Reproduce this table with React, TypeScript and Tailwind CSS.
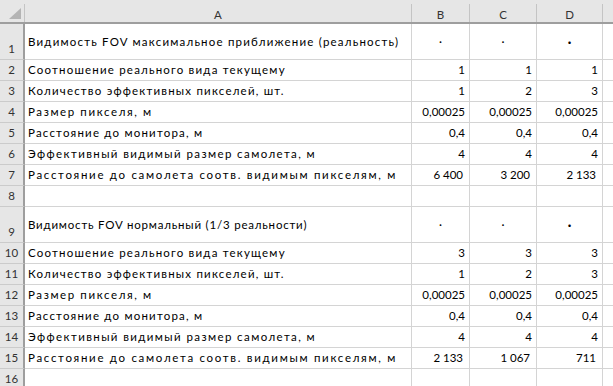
type Row = {
  n: number;
  a?: string;
  v?: [string, string, string];
  tall?: boolean;
  dots?: boolean;
  pad?: boolean;
  t?: string;
};

const rows: Row[] = [
  { n: 1, a: "Видимость FOV максимальное приближение (реальность)", tall: true, dots: true },
  { n: 2, a: "Соотношение реального вида текущему", v: ["1", "1", "1"] },
  { n: 3, a: "Количество эффективных пикселей, шт.", v: ["1", "2", "3"] },
  { n: 4, a: "Размер пикселя, м", v: ["0,00025", "0,00025", "0,00025"], t: "tracking-[1.6px]" },
  { n: 5, a: "Расстояние до монитора, м", v: ["0,4", "0,4", "0,4"] },
  { n: 6, a: "Эффективный видимый размер самолета, м", v: ["4", "4", "4"], t: "tracking-[1.4px]" },
  { n: 7, a: "Расстояние до самолета соотв. видимым пикселям, м", v: ["6 400", "3 200", "2 133"], pad: true, t: "tracking-[1.7px]" },
  { n: 8 },
  { n: 9, a: "Видимость FOV нормальный (1/3 реальности)", tall: true, dots: true, t: "tracking-[0.8px]" },
  { n: 10, a: "Соотношение реального вида текущему", v: ["3", "3", "3"] },
  { n: 11, a: "Количество эффективных пикселей, шт.", v: ["1", "2", "3"] },
  { n: 12, a: "Размер пикселя, м", v: ["0,00025", "0,00025", "0,00025"], t: "tracking-[1.6px]" },
  { n: 13, a: "Расстояние до монитора, м", v: ["0,4", "0,4", "0,4"] },
  { n: 14, a: "Эффективный видимый размер самолета, м", v: ["4", "4", "4"], t: "tracking-[1.4px]" },
  { n: 15, a: "Расстояние до самолета соотв. видимым пикселям, м", v: ["2 133", "1 067", "711"], pad: true, t: "tracking-[1.7px]" },
  { n: 16 },
];

const valueWidths = ["w-[58px]", "w-[67px]", "w-[66px]"];

function HeaderCell({ w, label }: { w: string; label: string }) {
  return (
    <div className={`${w} shrink-0 flex`}>
      <div className="flex-1 flex items-end justify-center text-[#333]">{label}</div>
      <div className="w-px mt-1 bg-[#c4c4c4]" />
    </div>
  );
}

function DataRow({ r }: { r: Row }) {
  const h = r.tall ? "h-[36px]" : "h-[21px]";
  return (
    <div className={`flex ${h}`}>
      <div className="w-[25px] shrink-0 bg-[#e6e6e6] border-r-2 border-r-[#9e9e9e] border-b border-b-[#cbcbcb] flex items-end justify-center pb-[3px] text-[#333]">
        {r.n}
      </div>
      <div
        className={`w-[387px] shrink-0 border-r border-b border-[#d4d4d4] flex pl-[3px] whitespace-nowrap overflow-hidden ${
          r.t ?? "tracking-[1.2px]"
        } ${r.tall ? "items-center" : "items-end pb-[3px]"}`}
      >
        {r.a}
      </div>
      {valueWidths.map((w, i) => (
        <div
          key={i}
          className={`${w} shrink-0 border-r border-b border-[#d4d4d4] flex ${
            r.dots
              ? "items-center justify-center"
              : `items-end justify-end pb-[3px] ${r.pad ? "pr-[6px]" : "pr-[4px]"}`
          }`}
        >
          {r.dots ? <span className={i === 2 ? "font-bold text-[13px]" : ""}>·</span> : r.v ? r.v[i] : ""}
        </div>
      ))}
      <div className="flex-1 border-b border-[#d4d4d4]" />
    </div>
  );
}

export default function App() {
  return (
    <div className="w-[613px] h-[386px] overflow-hidden bg-white text-black text-[11.5px] leading-[14px] [font-family:Lato,'Noto_Sans',sans-serif]">
      <div className="flex h-[24px] bg-[#e6e6e6] border-b-2 border-b-[#9e9e9e]">
        <div className="w-[25px] shrink-0 flex">
          <div className="flex-1 flex items-start">
            <svg width="24" height="22" viewBox="0 0 24 22">
              <polygon points="21,8 21,19 9,19" fill="#b4b4b4" />
            </svg>
          </div>
          <div className="w-px mt-1 bg-[#c4c4c4]" />
        </div>
        <HeaderCell w="w-[387px]" label="A" />
        <HeaderCell w="w-[58px]" label="B" />
        <HeaderCell w="w-[67px]" label="C" />
        <HeaderCell w="w-[66px]" label="D" />
        <div className="flex-1" />
      </div>
      {rows.map((r) => (
        <DataRow key={r.n} r={r} />
      ))}
    </div>
  );
}
